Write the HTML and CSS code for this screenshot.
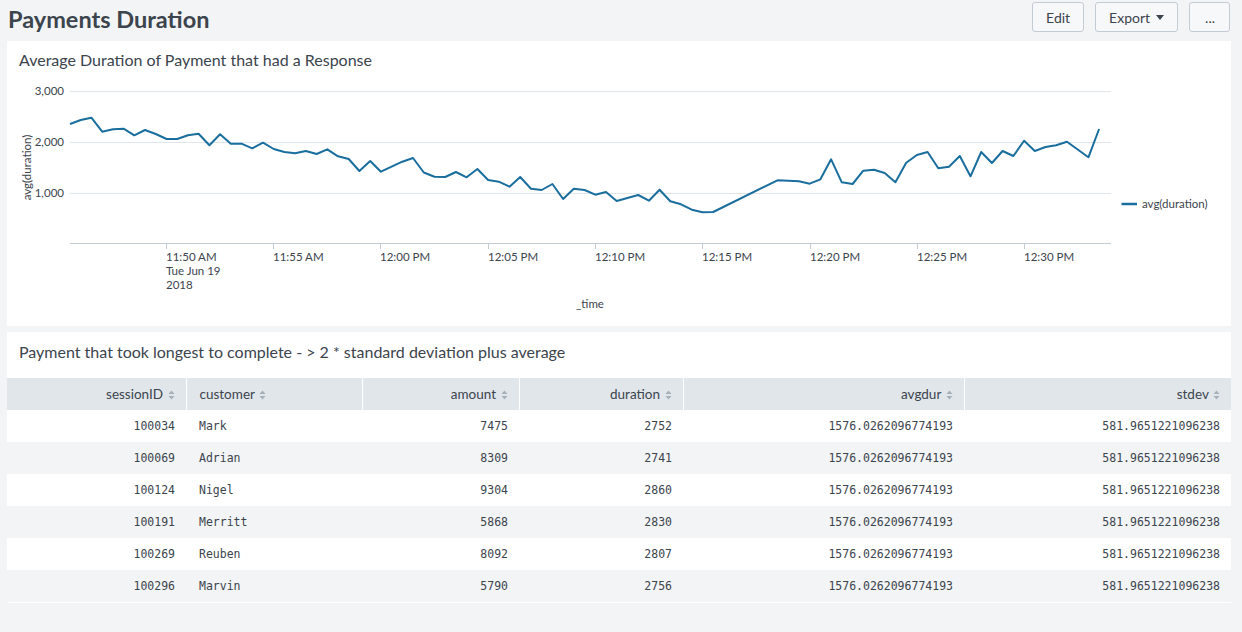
FILE: index.html
```html
<!DOCTYPE html>
<html>
<head>
<meta charset="utf-8">
<title>Payments Duration</title>
<link rel="stylesheet" href="styles.css">
</head>
<body>
<div class="dash">
  <header class="dash-head">
    <h1 class="dash-title">Payments Duration</h1>
    <div class="actions">
      <button class="btn">Edit</button>
      <button class="btn">Export <span class="caret"></span></button>
      <button class="btn btn-more">...</button>
    </div>
  </header>

  <section class="panel chart-panel">
    <h2 class="panel-title">Average Duration of Payment that had a Response</h2>
    <svg class="chart" width="1224" height="245" viewBox="7 81 1224 245">
      <g class="grid">
        <line x1="70" y1="91.5" x2="1111" y2="91.5"/>
        <line x1="70" y1="142.5" x2="1111" y2="142.5"/>
        <line x1="70" y1="193.5" x2="1111" y2="193.5"/>
      </g>
      <line class="axis" x1="70" y1="243.5" x2="1111" y2="243.5"/>
      <g class="ticks">
        <line x1="166.5" y1="243.5" x2="166.5" y2="249"/>
        <line x1="273.5" y1="243.5" x2="273.5" y2="249"/>
        <line x1="380.5" y1="243.5" x2="380.5" y2="249"/>
        <line x1="488.5" y1="243.5" x2="488.5" y2="249"/>
        <line x1="595.5" y1="243.5" x2="595.5" y2="249"/>
        <line x1="702.5" y1="243.5" x2="702.5" y2="249"/>
        <line x1="810.5" y1="243.5" x2="810.5" y2="249"/>
        <line x1="917.5" y1="243.5" x2="917.5" y2="249"/>
        <line x1="1024.5" y1="243.5" x2="1024.5" y2="249"/>
      </g>
      <g class="ylabels">
        <text x="64" y="95">3,000</text>
        <text x="64" y="146">2,000</text>
        <text x="64" y="197">1,000</text>
      </g>
      <text class="ytitle" transform="translate(31 167.5) rotate(-90)">avg(duration)</text>
      <g class="xlabels">
        <text x="166" y="261">11:50 AM</text>
        <text x="166" y="275">Tue Jun 19</text>
        <text x="166" y="289">2018</text>
        <text x="273" y="261">11:55 AM</text>
        <text x="380" y="261">12:00 PM</text>
        <text x="488" y="261">12:05 PM</text>
        <text x="595" y="261">12:10 PM</text>
        <text x="702" y="261">12:15 PM</text>
        <text x="810" y="261">12:20 PM</text>
        <text x="917" y="261">12:25 PM</text>
        <text x="1024" y="261">12:30 PM</text>
      </g>
      <text class="xtitle" x="590" y="308">_time</text>
      <polyline class="series" points="70.0,124 80.7,120 91.4,117.7 102.2,131.7 112.9,129.3 123.6,128.7 134.3,135.3 145.0,130 155.8,134 166.5,139 177.2,139 187.9,135.3 198.6,133.7 209.4,145.3 220.1,134.3 230.8,143.7 241.5,143.7 252.2,148.3 263.0,142.7 273.7,149 284.4,152 295.1,153.3 305.8,151 316.6,154 327.3,149.3 338.0,156.3 348.7,159 359.4,171 370.2,161 380.9,171.7 391.6,166.7 402.3,161.7 413.0,158 423.8,172.5 434.5,176.7 445.2,177 455.9,172 466.6,177.3 477.4,169 488.1,180 498.8,181.7 509.5,186.7 520.2,177 531.0,188.7 541.7,190 552.4,184 563.1,199 573.8,188.7 584.6,190 595.3,194.7 606.0,192 616.7,201 627.4,198 638.2,195 648.9,200.7 659.6,189.7 670.3,201.3 681.0,204.3 691.8,209.7 702.5,212.3 713.2,212 777.5,180.3 788.2,180.7 799.0,181.3 809.7,183.7 820.4,179.3 831.1,159.3 841.8,182.3 852.6,184 863.3,170.7 874.0,169.7 884.7,173 895.4,182.3 906.2,162.7 916.9,155 927.6,152 938.3,168.3 949.0,166.7 959.8,156 970.5,176.3 981.2,152 991.9,163 1002.6,151 1013.4,156 1024.1,140.7 1034.8,151 1045.5,147 1056.2,145.3 1067.0,141.7 1088.4,157.3 1099.1,129"/>
      <line class="legend-swatch" x1="1121.5" y1="204" x2="1137" y2="204"/>
      <text class="legend-label" x="1142" y="208">avg(duration)</text>
    </svg>
  </section>

  <section class="panel table-panel">
    <h2 class="panel-title">Payment that took longest to complete - &gt; 2 * standard deviation plus average</h2>
    <table class="results">
      <colgroup>
        <col class="col-session">
        <col class="col-customer">
        <col class="col-amount">
        <col class="col-duration">
        <col class="col-avgdur">
        <col class="col-stdev">
      </colgroup>
      <thead>
        <tr>
          <th class="num">sessionID <svg class="sort" width="7" height="10" viewBox="0 0 7 10"><path d="M3.5 0.5 L6.5 4 H0.5 Z M3.5 9.5 L6.5 6 H0.5 Z"/></svg></th>
          <th>customer <svg class="sort" width="7" height="10" viewBox="0 0 7 10"><path d="M3.5 0.5 L6.5 4 H0.5 Z M3.5 9.5 L6.5 6 H0.5 Z"/></svg></th>
          <th class="num">amount <svg class="sort" width="7" height="10" viewBox="0 0 7 10"><path d="M3.5 0.5 L6.5 4 H0.5 Z M3.5 9.5 L6.5 6 H0.5 Z"/></svg></th>
          <th class="num">duration <svg class="sort" width="7" height="10" viewBox="0 0 7 10"><path d="M3.5 0.5 L6.5 4 H0.5 Z M3.5 9.5 L6.5 6 H0.5 Z"/></svg></th>
          <th class="num">avgdur <svg class="sort" width="7" height="10" viewBox="0 0 7 10"><path d="M3.5 0.5 L6.5 4 H0.5 Z M3.5 9.5 L6.5 6 H0.5 Z"/></svg></th>
          <th class="num">stdev <svg class="sort" width="7" height="10" viewBox="0 0 7 10"><path d="M3.5 0.5 L6.5 4 H0.5 Z M3.5 9.5 L6.5 6 H0.5 Z"/></svg></th>
        </tr>
      </thead>
      <tbody>
        <tr><td class="num">100034</td><td>Mark</td><td class="num">7475</td><td class="num">2752</td><td class="num">1576.0262096774193</td><td class="num">581.9651221096238</td></tr>
        <tr><td class="num">100069</td><td>Adrian</td><td class="num">8309</td><td class="num">2741</td><td class="num">1576.0262096774193</td><td class="num">581.9651221096238</td></tr>
        <tr><td class="num">100124</td><td>Nigel</td><td class="num">9304</td><td class="num">2860</td><td class="num">1576.0262096774193</td><td class="num">581.9651221096238</td></tr>
        <tr><td class="num">100191</td><td>Merritt</td><td class="num">5868</td><td class="num">2830</td><td class="num">1576.0262096774193</td><td class="num">581.9651221096238</td></tr>
        <tr><td class="num">100269</td><td>Reuben</td><td class="num">8092</td><td class="num">2807</td><td class="num">1576.0262096774193</td><td class="num">581.9651221096238</td></tr>
        <tr><td class="num">100296</td><td>Marvin</td><td class="num">5790</td><td class="num">2756</td><td class="num">1576.0262096774193</td><td class="num">581.9651221096238</td></tr>
      </tbody>
    </table>
  </section>
</div>
</body>
</html>
```

FILE: styles.css
```css
html, body {
  margin: 0;
  background: #f2f4f5;
}
body {
  font-family: Lato, "Open Sans", "Liberation Sans", sans-serif;
  color: #3c444d;
}
.dash {
  padding: 0 11px 0 7px;
}
.dash-head {
  display: flex;
  justify-content: space-between;
  align-items: flex-start;
  height: 41px;
}
.dash-title {
  margin: 0 0 0 1px;
  font-size: 23.5px;
  font-weight: 700;
  line-height: 38px;
  color: #3c444d;
}
.actions {
  display: flex;
  gap: 11px;
  padding-top: 2px;
  margin-right: 1px;
}
.btn {
  height: 30px;
  padding: 0 13px;
  border: 1px solid #c3cbd4;
  border-radius: 3px;
  background: #f7f8fa;
  font-family: Lato, "Open Sans", sans-serif;
  font-size: 14px;
  color: #3c444d;
  display: flex;
  align-items: center;
  gap: 6px;
}
.btn-more {
  padding: 0 14px 0 15px;
}
.caret {
  width: 0;
  height: 0;
  border-left: 4px solid transparent;
  border-right: 4px solid transparent;
  border-top: 5px solid #3c444d;
}
.panel {
  background: #fff;
}
.panel-title {
  margin: 0;
  padding: 9px 12px 11px;
  font-size: 16px;
  font-weight: 400;
  line-height: 20px;
  color: #3c444d;
}
.chart-panel {
  height: 285px;
}
.chart {
  display: block;
  font-family: Lato, "Open Sans", sans-serif;
  font-size: 11.5px;
}
.chart text {
  fill: #3c444d;
}
.grid line {
  stroke: #e1e6eb;
  stroke-width: 1;
}
.axis, .ticks line {
  stroke: #c3cbd4;
  stroke-width: 1;
}
.ylabels text {
  text-anchor: end;
}
.ytitle {
  text-anchor: middle;
}
.xtitle {
  text-anchor: middle;
}
.series {
  fill: none;
  stroke: #1a6e9e;
  stroke-width: 2;
  stroke-linejoin: round;
}
.legend-swatch {
  stroke: #1a6e9e;
  stroke-width: 2.5;
}
.table-panel {
  margin-top: 6px;
  padding-bottom: 1px;
}
.table-panel .panel-title {
  padding: 10px 12px 16px;
}
.results {
  width: 100%;
  border-collapse: collapse;
  table-layout: fixed;
}
.col-session { width: 179px; }
.col-customer { width: 176px; }
.col-amount { width: 157px; }
.col-duration { width: 164px; }
.col-avgdur { width: 281px; }
.col-stdev { width: 267px; }
.results th {
  height: 32px;
  padding: 0 11px 0 13px;
  background: #e1e6eb;
  border-left: 1px solid #fff;
  font-size: 13.5px;
  font-weight: 400;
  text-align: left;
  color: #3c444d;
  white-space: nowrap;
}
.results th:first-child {
  border-left: none;
}
.results td {
  height: 32px;
  padding: 0 11px 0 13px;
  font-family: "DejaVu Sans Mono", "Liberation Mono", monospace;
  font-size: 11.5px;
  color: #3c444d;
  white-space: nowrap;
}
.results .num {
  text-align: right;
}
.results tbody tr:nth-child(even) td {
  background: #f2f4f5;
}
.sort {
  fill: #a7afb7;
  vertical-align: -1px;
  margin-left: 1px;
}
```
